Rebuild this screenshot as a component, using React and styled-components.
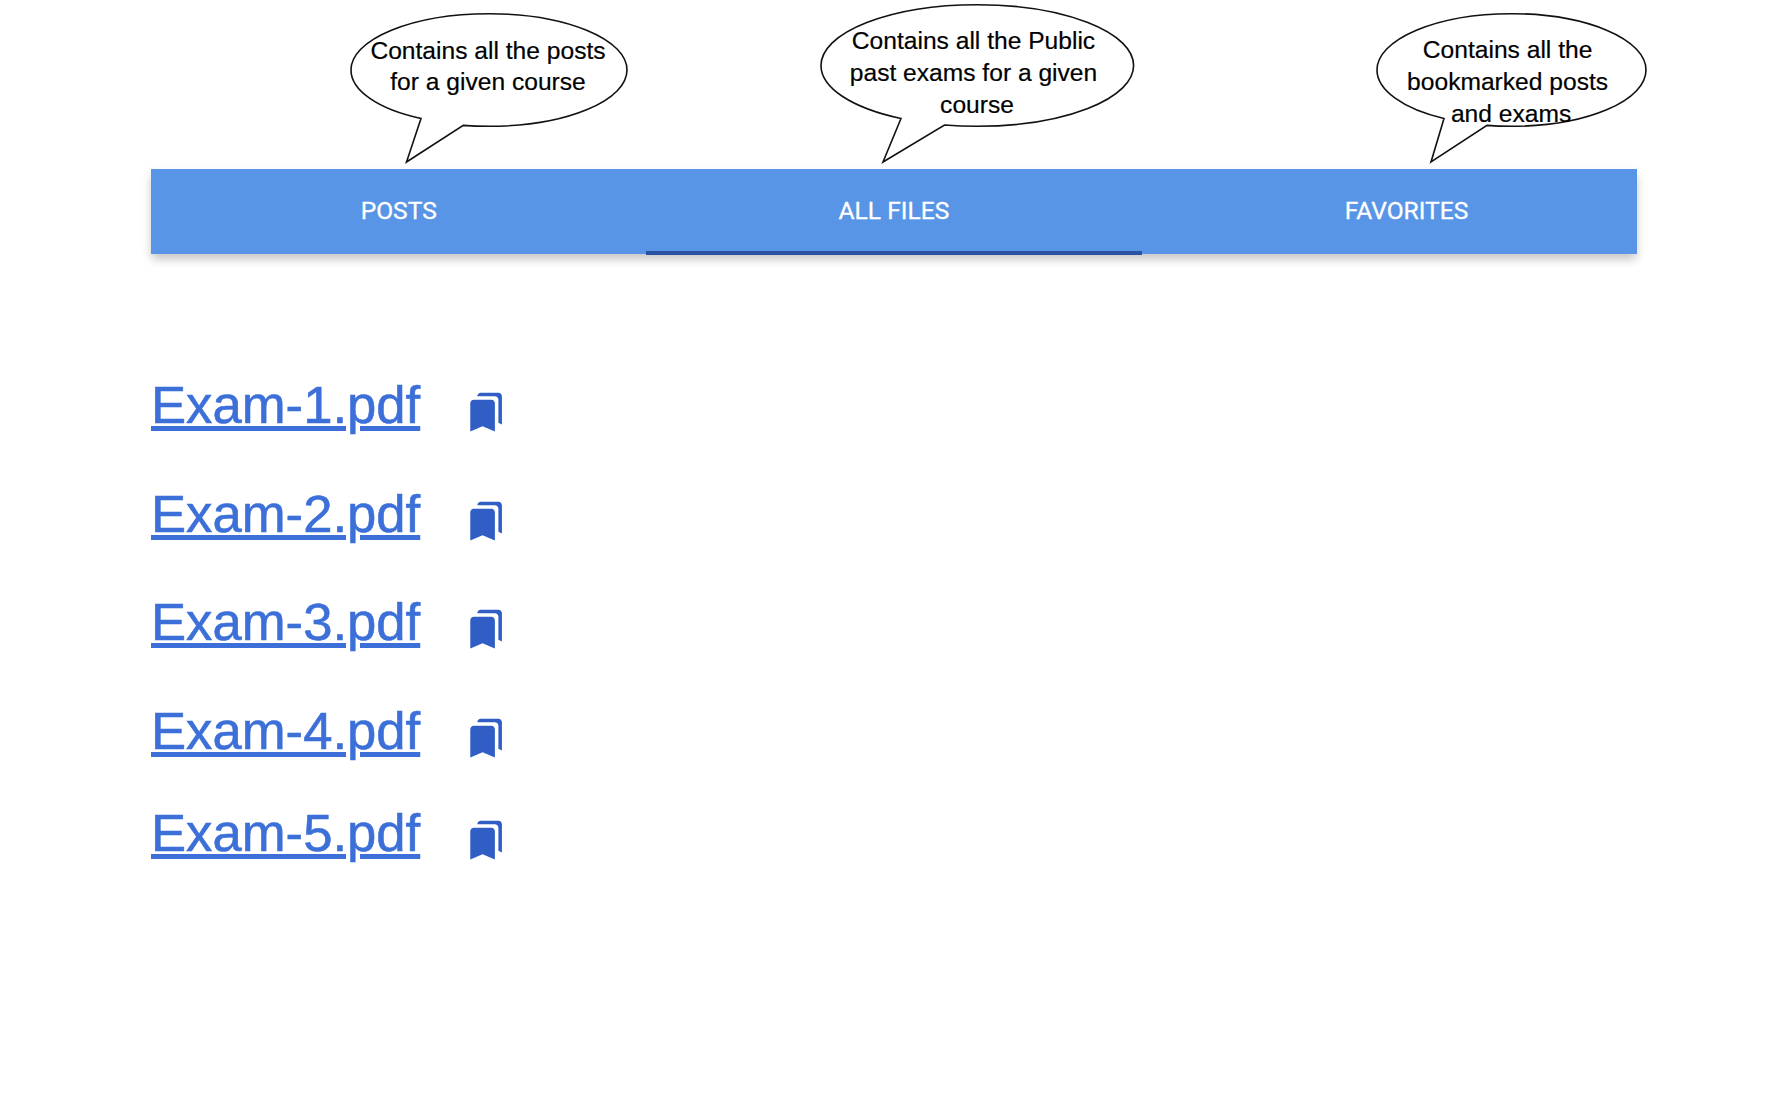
import React from "react";
import styled, { createGlobalStyle } from "styled-components";

const GlobalStyle = createGlobalStyle`
  * { box-sizing: border-box; }
  body {
    margin: 0;
    background: #fff;
    font-family: "Liberation Sans", Arial, Helvetica, sans-serif;
  }
`;

const Page = styled.div`
  width: 1788px;
  height: 1102px;
  overflow: hidden;
`;

const Callouts = styled.div`
  display: flex;
  height: 169.3px;
`;

const Callout = styled.div`
  position: relative;
  flex: none;
  width: ${(p) => p.$width}px;
  margin-left: ${(p) => p.$gap}px;
  padding-top: ${(p) => p.$top}px;
`;

const Outline = styled.svg`
  position: absolute;
  left: 0;
  top: 0;
  overflow: visible;
  fill: #fff;
  stroke: #111;
  stroke-width: 1.6;
`;

const Caption = styled.div`
  position: relative;
  width: ${(p) => p.$width}px;
  color: #000;
  font-size: 24.6px;
  line-height: ${(p) => p.$leading}px;
  text-align: center;
  -webkit-text-stroke: 0.2px #000;
`;

const Line = styled.div`
  white-space: nowrap;
  padding-right: ${(p) => (p.$last ? 0 : 7)}px;
`;

const Tabs = styled.nav`
  display: grid;
  grid-template-columns: repeat(3, 1fr);
  width: 1485.4px;
  height: 84.3px;
  margin-left: 151.2px;
  background: #5995e6;
  box-shadow: 0 6px 9px -1px rgba(0, 0, 0, 0.2), 0 3px 14px 0 rgba(0, 0, 0, 0.06);
`;

const Tab = styled.div`
  position: relative;
  display: flex;
  align-items: center;
  justify-content: center;
  padding-left: ${(p) => p.$inset || 0}px;
  color: #fff;
  font: 400 24.6px/1 Roboto, sans-serif;
  -webkit-text-stroke: 0.3px #fff;
`;

const Indicator = styled.span`
  position: absolute;
  left: 0;
  right: -1px;
  bottom: -1px;
  height: 4px;
  background: #2a52a0;
`;

const Files = styled.ul`
  list-style: none;
  margin: 0;
  padding: 119.5px 0 0 151px;
`;

const FileRow = styled.li`
  display: flex;
  align-items: flex-start;
  gap: 44.5px;
  height: ${(p) => p.$height}px;
`;

const FileLink = styled.a`
  color: #3c70d8;
  font-size: 52.67px;
  line-height: 64px;
  text-decoration: underline;
  text-decoration-thickness: 5px;
  text-underline-offset: 2.6px;
  -webkit-text-stroke: 0.6px #3c70d8;
`;

const Bookmarks = styled.svg`
  width: 42.2px;
  height: 42.2px;
  margin-top: 17.8px;
  fill: #305ec4;
`;

const callouts = [
  {
    gap: 350.5, width: 276, top: 34.5, leading: 31.9, caption: 276,
    shape: "M70 118.5 L55.5 162 L112.3 125.4 Q124 126.3 138 126.3 A138 56.3 0 0 0 138 13.7 A138 56.3 0 0 0 0 70 C0 90 26 109 70 118.5 Z",
    lines: ["Contains all the posts", "for a given course"], trailing: true,
  },
  {
    gap: 194.5, width: 312.6, top: 24.5, leading: 32, caption: 312,
    shape: "M80 118.5 L62 162 L123.5 125 Q139 126.3 156.3 126.3 A156.3 60.8 0 0 0 156.3 4.7 A156.3 60.8 0 0 0 0 65.5 C0 88 31 108 80 118.5 Z",
    lines: ["Contains all the Public", "past exams for a given", "course"],
  },
  {
    gap: 243, width: 269, top: 34.3, leading: 31.7, caption: 269,
    shape: "M67 118.5 L54 162 L110 125.4 Q121 126.3 134.5 126.3 A134.5 56.3 0 0 0 134.5 13.7 A134.5 56.3 0 0 0 0 70 C0 90 26 109 67 118.5 Z",
    lines: ["Contains all the", "bookmarked posts", "and exams"],
  },
];

const files = [
  { name: "Exam-1.pdf", height: 108.7 },
  { name: "Exam-2.pdf", height: 108.7 },
  { name: "Exam-3.pdf", height: 108.7 },
  { name: "Exam-4.pdf", height: 101.8 },
  { name: "Exam-5.pdf", height: 101.8 },
];

export default function App() {
  return (
    <Page>
      <GlobalStyle />
      <Callouts>
        {callouts.map((c) => (
          <Callout key={c.shape} $gap={c.gap} $width={c.width} $top={c.top}>
            <Outline width={c.width} height="164">
              <path d={c.shape} />
            </Outline>
            <Caption $width={c.caption + (c.trailing ? 6 : 0)} $leading={c.leading}>
              {c.lines.map((text, i) => (
                <Line key={text} $last={!c.trailing && i === c.lines.length - 1}>
                  {text}
                </Line>
              ))}
            </Caption>
          </Callout>
        ))}
      </Callouts>
      <Tabs>
        <Tab>POSTS</Tab>
        <Tab>
          ALL FILES
          <Indicator />
        </Tab>
        <Tab $inset={35}>FAVORITES</Tab>
      </Tabs>
      <Files>
        {files.map((f) => (
          <FileRow key={f.name} $height={f.height}>
            <FileLink href="#">{f.name}</FileLink>
            <Bookmarks viewBox="0 0 24 24">
              <path d="M19 18l2 1V3c0-1.1-.9-2-2-2H8.99C7.89 1 7 1.9 7 3h10c1.1 0 2 .9 2 2v13zM15 5H5c-1.1 0-2 .9-2 2v16l7-3 7 3V7c0-1.1-.9-2-2-2z" />
            </Bookmarks>
          </FileRow>
        ))}
      </Files>
    </Page>
  );
}
